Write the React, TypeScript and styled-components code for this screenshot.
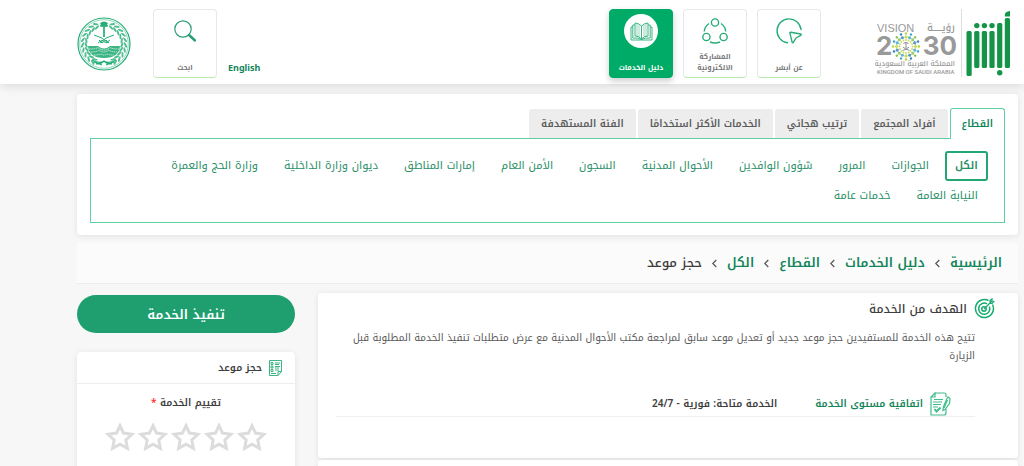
import React from 'react';
import styled, { createGlobalStyle, css } from 'styled-components';

const green = '#12855a';
const brand = '#00ab67';

const GlobalStyle = createGlobalStyle`
  * { box-sizing: border-box; }
  body {
    margin: 0;
    background: #f7f7f7;
    color: #3d3d3d;
    font-family: "Noto Kufi Arabic", "Noto Sans", sans-serif;
    font-size: 10px;
    line-height: 18px;
  }
  a { color: inherit; text-decoration: none; }
  button { font-family: inherit; cursor: pointer; }
  h1, h2, p, ul, ol { margin: 0; padding: 0; }
  ul, ol { list-style: none; }
  svg { display: block; flex: none; }
`;

const Page = styled.div`
  min-height: 100vh;
  overflow: hidden;
`;

const Header = styled.header`
  display: flex;
  align-items: flex-start;
  height: 84px;
  padding-block: 9px 0;
  padding-inline: 14px 77px;
  background: #fff;
  box-shadow: 0 2px 10px rgba(0, 0, 0, 0.12);
`;

const Brand = styled.a`
  display: flex;
  gap: 4px;
`;

const VisionMark = styled.span`
  padding-inline-start: 4px;
  border-inline-start: 1px solid #ddd;
`;

const ServiceNav = styled.nav`
  display: flex;
  gap: 10px;
  margin-inline-start: 54px;
`;

const tile = css`
  display: flex;
  flex-direction: column;
  align-items: center;
  justify-content: space-between;
  width: 64px;
  height: 69px;
  padding: 4px 2px;
  border: 1px solid #e8e8e8;
  border-bottom-color: #b9ecae;
  border-radius: 4px;
  background: #fff;
  color: #777;
  font-size: 7px;
  font-weight: 700;
  line-height: 11px;
  text-align: center;
`;

const NavTile = styled.a<{ $active?: boolean }>`
  ${tile}
  ${(p) =>
    p.$active &&
    css`
      border-color: ${brand};
      background: ${brand};
      color: #fff;
      box-shadow: 0 3px 6px rgba(0, 0, 0, 0.2);
    `}
`;

const SearchTile = styled.button`
  ${tile}
`;

const TileIcon = styled.span<{ $disc?: boolean }>`
  display: grid;
  place-items: center;
  width: 34px;
  height: 34px;
  border-radius: 50%;
  background: ${(p) => (p.$disc ? '#fff' : 'transparent')};
`;

const HeaderEnd = styled.div`
  display: flex;
  align-items: flex-start;
  margin-inline-start: auto;
`;

const Language = styled.a`
  margin-block-start: 50px;
  margin-inline-end: 11px;
  color: ${green};
  font-family: "Noto Sans", sans-serif;
  font-size: 9px;
  font-weight: 700;
`;

const Emblem = styled.a`
  margin-block-start: 8px;
  margin-inline-start: 22px;
`;

const Main = styled.main`
  padding-block: 10px 0;
  padding-inline: 6px 77px;
`;

const Card = styled.section`
  border-radius: 4px;
  background: #fff;
  box-shadow: 0 1px 6px rgba(0, 0, 0, 0.09);
`;

const Directory = styled(Card)`
  padding: 14px 13px 12px;
`;

const Tabs = styled.div`
  display: flex;
  align-items: flex-end;
  gap: 2px;
`;

const Tab = styled.button<{ $active?: boolean }>`
  height: 29px;
  padding: 0 11px;
  border: 1px solid #ededed;
  border-bottom: 0;
  border-radius: 3px 3px 0 0;
  background: #ededed;
  color: #5c5c5c;
  font-size: 10px;
  font-weight: 600;
  line-height: 28px;
  ${(p) =>
    p.$active &&
    css`
      height: 31px;
      margin-block-end: -1px;
      border-color: #62cfa2;
      background: #fff;
      color: ${green};
    `}
`;

const Sectors = styled.ul`
  display: flex;
  flex-wrap: wrap;
  align-content: flex-start;
  column-gap: 6px;
  min-height: 85px;
  padding: 12px 16px 10px;
  border: 1px solid #62cfa2;
`;

const Sector = styled.a<{ $active?: boolean }>`
  display: block;
  height: 30px;
  padding: 0 8px;
  border: ${(p) => (p.$active ? `2px solid #22a774` : '2px solid transparent')};
  border-radius: 3px;
  color: #2a8f68;
  font-size: 11px;
  font-weight: ${(p) => (p.$active ? 600 : 400)};
  line-height: 26px;
`;

const Breadcrumb = styled.nav`
  margin-block: 8px 9px;
  padding: 0 16px;
  border-bottom: 1px solid #ececec;
  background: #fbfbfb;
`;

const Trail = styled.ol`
  display: flex;
  align-items: center;
  gap: 9px;
  color: #3d3d3d;
  font-size: 13px;
  font-weight: 500;
  line-height: 40px;
`;

const Crumb = styled.li`
  display: flex;
  align-items: center;
  gap: 9px;
`;

const CrumbLink = styled.a`
  color: ${green};
  font-weight: 600;
`;

const Columns = styled.div`
  display: flex;
  align-items: flex-start;
  gap: 23px;
`;

const Content = styled.div`
  display: flex;
  flex: 1;
  flex-direction: column;
  gap: 2px;
`;

const Goal = styled(Card)`
  min-height: 165px;
  padding-block: 5px 0;
  padding-inline: 23px 18px;
`;

const NextCard = styled(Card)`
  min-height: 40px;
`;

const GoalTitle = styled.h2`
  display: flex;
  align-items: center;
  gap: 7px;
  font-size: 12px;
  font-weight: 500;
  line-height: 20px;
`;

const GoalBody = styled.div`
  margin-inline-start: 20px;
`;

const GoalText = styled.p`
  margin-block-start: 10px;
  color: #5a5a5a;
`;

const Agreement = styled.div`
  display: flex;
  align-items: center;
  margin-block-start: 27px;
  padding-inline-start: 24px;
  border-bottom: 1px solid #efefef;
  font-weight: 600;
`;

const AgreementLink = styled.a`
  display: flex;
  align-items: center;
  gap: 7px;
  margin-inline-end: 38px;
  color: ${green};
`;

const Sidebar = styled.aside`
  width: 218px;
  padding-block-start: 2px;
`;

const StartButton = styled.button`
  width: 100%;
  height: 38px;
  border: 0;
  border-radius: 19px;
  background: #1f9f6f;
  color: #fff;
  font-size: 13px;
  font-weight: 600;
`;

const RatingCard = styled(Card)`
  margin-block-start: 19px;
  min-height: 140px;
`;

const RatingTitle = styled.h2`
  display: flex;
  align-items: center;
  gap: 7px;
  height: 32px;
  padding-inline-start: 13px;
  border-bottom: 1px solid #eee;
  font-size: 10px;
  font-weight: 600;
`;

const Rating = styled.fieldset`
  margin: 0;
  padding: 10px 0 0;
  border: 0;
`;

const RatingLegend = styled.legend`
  width: 100%;
  padding: 10px 0 0;
  font-size: 10px;
  font-weight: 600;
  text-align: center;
`;

const Required = styled.span`
  color: #f33;
`;

const Stars = styled.div`
  display: flex;
  justify-content: center;
  gap: 3px;
`;

const StarLabel = styled.label`
  position: relative;
  cursor: pointer;
`;

const StarInput = styled.input`
  position: absolute;
  inset: 0;
  width: 100%;
  height: 100%;
  margin: 0;
  opacity: 0;
`;

const AbsherLogo = () => (
  <svg width="44" height="68" viewBox="0 0 44 68" role="img" aria-label="أبشر" fill="#149447">
    <rect x="0.5" y="22" width="5.2" height="45" rx="1.5" />
    <rect x="8.2" y="22" width="5.2" height="37" rx="1.5" />
    <rect x="15.8" y="22" width="5.2" height="37" rx="1.5" />
    <rect x="23.4" y="22" width="5.2" height="37" rx="1.5" />
    <rect x="31.100" y="14" width="5.2" height="45" rx="1.5" />
    <rect x="38.800" y="9" width="5.2" height="50" rx="1.5" />
    <path d="M38.800 7.500V6.500c0-3 1.800-4 5.200-4.500v5.500z" />
    <circle cx="10.800" cy="16.600" r="2.700" />
    <circle cx="18.400" cy="16.600" r="2.700" />
    <circle cx="26" cy="16.600" r="2.700" />
    <circle cx="33.700" cy="63.700" r="2.700" />
  </svg>
);

const rays = Array.from({ length: 16 }, (_, i) => i * 22.5);
const rayColours = ['#b9d53b', '#38a2c8', '#7fc242', '#2f7fb5'];

const VisionLogo = () => (
  <svg width="82" height="68" viewBox="0 0 82 68" direction="ltr" fill="#999">
    <text x="2" y="23" fontFamily="Liberation Sans" fontSize="11">VISION</text>
    <text x="80" y="22" textAnchor="end" fontFamily="Noto Kufi Arabic, sans-serif" fontSize="10" fontWeight="500">رؤيـــــة</text>
    <text x="1" y="46" fontFamily="Inter, sans-serif" fontSize="26" fontWeight="700">2</text>
    <text x="82" y="46" textAnchor="end" fontFamily="Inter, sans-serif" fontSize="26" fontWeight="700">30</text>
    {rays.map((a, i) => (
      <g key={a} transform={`rotate(${a} 31 37.500)`} fill={rayColours[i % 4]}>
        <circle cx="31" cy="24.500" r="1.200" />
        <path d="M29 28l2-2 2 2-2 2z" opacity="0.8" />
        <circle cx="31" cy="31" r="0.900" fill="#c9d95a" />
      </g>
    ))}
    <path d="M31 33.500v6M28.500 34.500q2.500-2.500 5 0M27.500 41.500q4-1 6.500-3.500M34.500 41.500q-4-1-6.500-3.500" fill="none" stroke="#8c8c8c" />
    <text x="80" y="57" textAnchor="end" fontFamily="Noto Kufi Arabic, sans-serif" fontSize="7" fontWeight="500">المملكة العربية السعودية</text>
    <text x="2" y="65" fontFamily="Roboto, sans-serif" fontSize="6" fontWeight="500">KINGDOM OF SAUDI ARABIA</text>
  </svg>
);

const leaves = [0, 1, 2, 3, 4, 5, 6, 7, 8, 9];

const MinistryEmblem = () => (
  <svg width="54" height="54" viewBox="0 0 54 54" role="img" aria-label="وزارة الداخلية" fill="none" stroke="#27ad77">
    <circle cx="27" cy="27" r="26" strokeWidth="1.200" />
    <circle cx="27" cy="27" r="24.300" strokeWidth="0.500" />
    {leaves.map((n) => (
      <g key={n} fill="#4dbd90" stroke="none">
        <g transform={`rotate(${-20 - n * 14} 27 27)`}>
          <ellipse cx="26" cy="5.500" rx="2.900" ry="1" transform="rotate(25 26 5.500)" />
          <ellipse cx="26" cy="9" rx="2.900" ry="1" transform="rotate(-25 26 9)" />
        </g>
        <g transform={`rotate(${20 + n * 14} 27 27)`}>
          <ellipse cx="28" cy="5.500" rx="2.900" ry="1" transform="rotate(-25 28 5.500)" />
          <ellipse cx="28" cy="9" rx="2.900" ry="1" transform="rotate(25 28 9)" />
        </g>
      </g>
    ))}
    <path d="M27 7v13M23.500 9.500q1.500-3 3.500-2.500 2-.5 3.500 2.500M23.500 7q3.500-3 7 0M24.500 9.500l2.500-2 2.500 2" strokeWidth="1.700" />
    <path d="M17 18q9 2 14 8M37 18q-9 2-14 8M21 26l4-3 4 3 4-3M22 23l3 3 4-3 3 3" strokeWidth="1" />
    <path d="M11 29h32q-1 12-16 12t-16-12z" fill="#3bb583" stroke="none" />
    <path d="M21 29q6 5 12 0z" fill="#fff" stroke="none" />
    <path d="M12 32q7 0 9-1.500 6 5 12 0 2 1.500 9 1.500M14 35q6 0 8-2 5 4 10 0 2 2 8 2M17 38q5 0 7-1 3 2 6 0 2 1 7 1" stroke="#fff" strokeWidth="0.700" strokeDasharray="1.500 0.700" />
    <path d="M15 43q7 4 12 1 5 3 12-1M19 47q5 0 8-3 3 3 8 3M17 45l8 3M37 45l-8 3" strokeWidth="1.200" />
  </svg>
);

const SearchIcon = () => (
  <svg width="22" height="22" viewBox="0 0 22 22" fill="none" stroke="#2b9e74">
    <circle cx="9" cy="9" r="8.200" strokeWidth="1.200" />
    <path d="M15 15l6 5.500" strokeWidth="2.400" strokeLinecap="round" />
  </svg>
);

const AboutIcon = () => (
  <svg width="26" height="26" viewBox="0 0 26 26" fill="none" stroke="#27ad77" strokeWidth="1.400" strokeLinejoin="round" strokeLinecap="round">
    <path d="M11.500 24.800A12 12 0 1 1 25 11.500" />
    <path d="M14.700 14.200q-1 0-.8 1l2.200 9q.6 1 1.400 0l2.500-4.200 4.700-2.600q1-.9 0-1.400z" />
  </svg>
);

const ParticipationIcon = () => (
  <svg width="26" height="26" viewBox="0 0 26 26" fill="none" stroke="#27ad77" strokeWidth="1.400">
    <circle cx="13" cy="4.500" r="3.600" />
    <circle cx="4.400" cy="19" r="3.600" />
    <circle cx="21.600" cy="19" r="3.600" />
    <path d="M7 5.500A11 11 0 0 0 2.200 13.500M19 5.500A11 11 0 0 1 23.800 13.500M8 24q5 2 10 0" />
  </svg>
);

const BookIcon = () => (
  <svg width="23" height="19" viewBox="0 0 23 19" fill="none" stroke="#27ad77" strokeWidth="0.900" strokeLinejoin="round">
    <path d="M11.500 4Q8.500 1 5 1v13q4 0 6.500 3 2.500-3 6.500-3V1q-3.500 0-6.500 3zM11.500 4v13" />
    <path d="M5 3H2.800v13q5.200-.5 8.700 1.500 3.500-2 8.700-1.500V3H18M2.800 5H1v13h21V5h-1.800" />
    <path d="M7 2v12M9 3v12M14 3v12M16 2v12" opacity="0.550" />
  </svg>
);

const TargetIcon = () => (
  <svg width="21" height="21" viewBox="0 0 21 21" fill="none" stroke="#14ab6e" strokeWidth="1.500">
    <path d="M14.500 2.500A9 9 0 1 0 18.500 6.500" />
    <path d="M13 5.800A5.600 5.600 0 1 0 15.400 8.500" />
    <circle cx="10" cy="11" r="2.200" />
    <path d="M10 11l8-8M16 2.500l2-1.500v2l2 .5-2 2h-2z" strokeWidth="1.200" />
  </svg>
);

const AgreementIcon = () => (
  <svg width="21" height="24" viewBox="0 0 21 24" fill="none" stroke="#40bd8b" strokeWidth="1.200">
    <path d="M5 1h9q2 0 2 2v2M16 17v4q0 2-2 2H1V5l4-4v4H1" />
    <path d="M4 7.500h9M3 10h9M3 12.500h8M3 15h5" />
    <path d="M4.500 17l2 2.500L10.500 15.500" strokeWidth="2" />
    <path d="M18 5l2 1.500-.5 5-4.500 6-2 1 .2-3 3.300-8z" />
    <path d="M17.500 8l-3.500 8" />
  </svg>
);

const FormIcon = () => (
  <svg width="13" height="16" viewBox="0 0 13 16" fill="none" stroke="#27ad77" strokeWidth="0.900">
    <path d="M.5.500h12v11l-3.500 4H.5zM9 15.500v-4h3.500" />
    <path d="M2 2.500h2v2H2zM2 6h2v2H2zM2 9.500h2v2H2zM6 3h5M6 4.500h4M6 6.500h5M6 8h4M6 10h4M2 13.500h5" />
  </svg>
);

const StarIcon = () => (
  <svg width="30" height="30" viewBox="0 0 30 30" fill="none" stroke="#dcdcdc" strokeWidth="3">
    <path d="M15 3.700l3.500 7.400 8.500 1.200-6.200 5.700 1.600 8.300-7.400-4.100-7.400 4.100 1.600-8.300L3 12.300l8.500-1.200z" />
  </svg>
);

const Chevron = () => (
  <svg width="7" height="9" viewBox="0 0 7 9" fill="none" stroke="#555" strokeWidth="1.200" aria-hidden="true">
    <path d="M5.300 1L1.800 4.500 5.300 8" />
  </svg>
);

const tabs = ['القطاع', 'أفراد المجتمع', 'ترتيب هجائي', 'الخدمات الأكثر استخدامًا', 'الفئة المستهدفة'];

const sectors = [
  'الكل', 'الجوازات', 'المرور', 'شؤون الوافدين', 'الأحوال المدنية', 'السجون', 'الأمن العام',
  'إمارات المناطق', 'ديوان وزارة الداخلية', 'وزارة الحج والعمرة', 'النيابة العامة', 'خدمات عامة',
];

const crumbs = ['الرئيسية', 'دليل الخدمات', 'القطاع', 'الكل'];

export default function App() {
  return (
    <Page dir="rtl" lang="ar">
      <GlobalStyle />
      <Header>
        <Brand href="#">
          <AbsherLogo />
          <VisionMark><VisionLogo /></VisionMark>
        </Brand>
        <ServiceNav>
          <NavTile href="#"><TileIcon><AboutIcon /></TileIcon>عن أبشر</NavTile>
          <NavTile href="#"><TileIcon><ParticipationIcon /></TileIcon>المشاركة الالكترونية</NavTile>
          <NavTile href="#" $active><TileIcon $disc><BookIcon /></TileIcon>دليل الخدمات</NavTile>
        </ServiceNav>
        <HeaderEnd>
          <Language href="#" lang="en">English</Language>
          <SearchTile type="button"><TileIcon><SearchIcon /></TileIcon>ابحث</SearchTile>
          <Emblem href="#"><MinistryEmblem /></Emblem>
        </HeaderEnd>
      </Header>
      <Main>
        <Directory>
          <Tabs role="tablist">
            {tabs.map((t, i) => (
              <Tab key={t} type="button" role="tab" aria-selected={i === 0} $active={i === 0}>{t}</Tab>
            ))}
          </Tabs>
          <Sectors>
            {sectors.map((s, i) => (
              <li key={s}><Sector href="#" $active={i === 0}>{s}</Sector></li>
            ))}
          </Sectors>
        </Directory>
        <Breadcrumb>
          <Trail>
            {crumbs.map((c) => (
              <Crumb key={c}><CrumbLink href="#">{c}</CrumbLink><Chevron /></Crumb>
            ))}
            <Crumb>حجز موعد</Crumb>
          </Trail>
        </Breadcrumb>
        <Columns>
          <Content>
            <Goal>
              <GoalTitle><TargetIcon />الهدف من الخدمة</GoalTitle>
              <GoalBody>
                <GoalText>
                  تتيح هذه الخدمة للمستفيدين حجز موعد جديد أو تعديل موعد سابق لمراجعة مكتب الأحوال المدنية مع عرض متطلبات تنفيذ الخدمة المطلوبة قبل الزيارة
                </GoalText>
                <Agreement>
                  <AgreementLink href="#"><AgreementIcon />اتفاقية مستوى الخدمة</AgreementLink>
                  <span>الخدمة متاحة: فورية - 24/7</span>
                </Agreement>
              </GoalBody>
            </Goal>
            <NextCard />
          </Content>
          <Sidebar>
            <StartButton type="button">تنفيذ الخدمة</StartButton>
            <RatingCard>
              <RatingTitle><FormIcon />حجز موعد</RatingTitle>
              <Rating>
                <RatingLegend>تقييم الخدمة <Required>*</Required></RatingLegend>
                <Stars>
                  {[1, 2, 3, 4, 5].map((n) => (
                    <StarLabel key={n}>
                      <StarInput type="radio" name="rating" value={n} aria-label={`${n}`} />
                      <StarIcon />
                    </StarLabel>
                  ))}
                </Stars>
              </Rating>
            </RatingCard>
          </Sidebar>
        </Columns>
      </Main>
    </Page>
  );
}
